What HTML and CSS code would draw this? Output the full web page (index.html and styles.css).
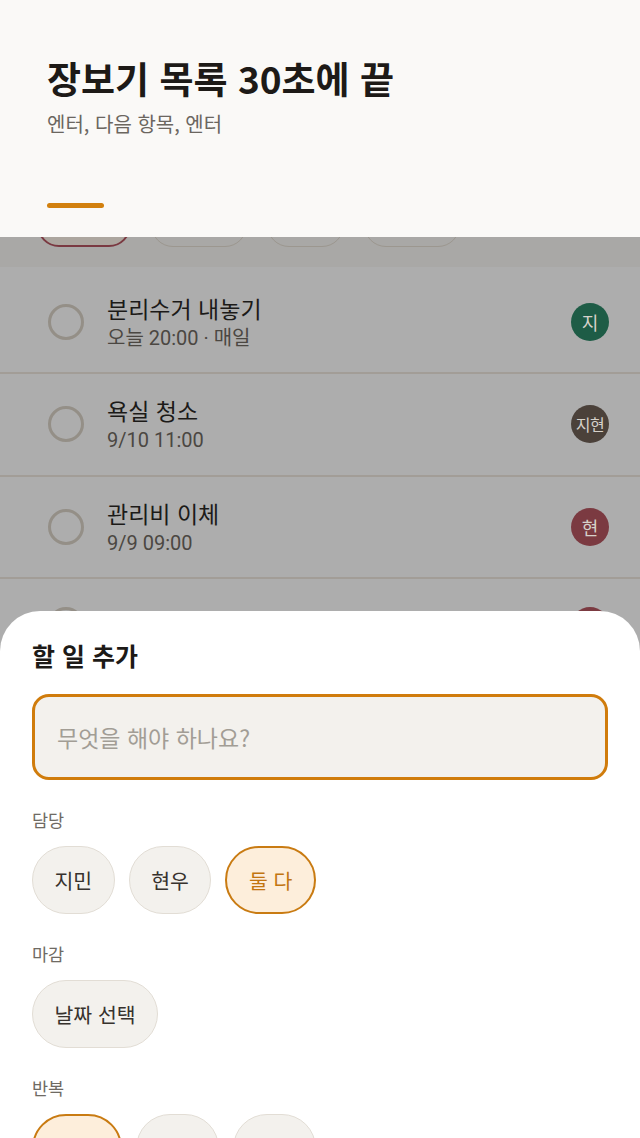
FILE: index.html
```html
<!DOCTYPE html>
<html lang="ko">
<head>
<meta charset="utf-8">
<title>장보기 목록</title>
<link rel="stylesheet" href="styles.css">
</head>
<body>
<div class="screen">
  <header class="top">
    <h1 class="title">장보기 목록 30초에 끝</h1>
    <p class="sub">엔터, 다음 항목, 엔터</p>
    <div class="tab-bar"></div>
  </header>

  <div class="dimmed">
    <div class="filters">
      <span class="fchip fchip-on f1">전체</span>
      <span class="fchip f2">지민</span>
      <span class="fchip f3">현우</span>
      <span class="fchip f4">함께</span>
    </div>
    <ul class="tasks">
      <li class="task">
        <span class="check"></span>
        <div class="task-text">
          <div class="task-title">분리수거 내놓기</div>
          <div class="task-meta">오늘 20:00 · 매일</div>
        </div>
        <span class="avatar av-green">지</span>
      </li>
      <li class="task">
        <span class="check"></span>
        <div class="task-text">
          <div class="task-title">욕실 청소</div>
          <div class="task-meta">9/10 11:00</div>
        </div>
        <span class="avatar av-brown av-small">지현</span>
      </li>
      <li class="task">
        <span class="check"></span>
        <div class="task-text">
          <div class="task-title">관리비 이체</div>
          <div class="task-meta">9/9 09:00</div>
        </div>
        <span class="avatar av-red">현</span>
      </li>
      <li class="task task-peek">
        <span class="check"></span>
        <div class="task-text">
          <div class="task-title">화분 물 주기</div>
        </div>
        <span class="avatar av-red">현</span>
      </li>
    </ul>
  </div>

  <section class="sheet">
    <h2 class="sheet-title">할 일 추가</h2>
    <div class="field"><span class="placeholder">무엇을 해야 하나요?</span></div>

    <div class="label">담당</div>
    <div class="chips">
      <span class="chip">지민</span>
      <span class="chip">현우</span>
      <span class="chip chip-on">둘 다</span>
    </div>

    <div class="label">마감</div>
    <div class="chips">
      <span class="chip">날짜 선택</span>
    </div>

    <div class="label">반복</div>
    <div class="chips">
      <span class="chip chip-on">안 함</span>
      <span class="chip">매일</span>
      <span class="chip">매주</span>
    </div>
  </section>
</div>
</body>
</html>
```

FILE: styles.css
```css
* { box-sizing: border-box; }
html, body {
  margin: 0;
  padding: 0;
  height: 1138px;
  overflow: hidden;
  background: #adadad;
  font-family: "Noto Sans CJK KR", "Noto Sans", sans-serif;
}
.screen {
  position: relative;
  width: 640px;
  height: 1138px;
  overflow: hidden;
}

/* header */
.top {
  position: relative;
  z-index: 2;
  background: #faf9f7;
  height: 237px;
  padding: 55px 47px 0;
}
.title {
  margin: 0;
  font-size: 37px;
  line-height: 46px;
  font-weight: 700;
  color: #1d1a17;
}
.sub {
  margin: 9px 0 0;
  font-size: 20px;
  line-height: 28px;
  color: #6b665f;
}
.tab-bar {
  margin-top: 65px;
  width: 57px;
  height: 5px;
  border-radius: 3px;
  background: #d2800e;
}

/* dimmed content */
.dimmed {
  position: relative;
  z-index: 1;
}
.filters {
  margin-top: -34px;
  padding: 0 0 20px 37px;
  display: flex;
  gap: 20px;
  background: #a9a8a6;
}
.fchip {
  height: 44px;
  border-radius: 22px;
  border: 1.5px solid #9c978f;
  display: inline-flex;
  align-items: center;
  justify-content: center;
  font-size: 17px;
  color: #4a4540;
}
.fchip-on {
  border: 2px solid #7a3941;
  background: #aca69f;
}
.f1 { width: 94px; }
.f2 { width: 96px; }
.f3 { width: 77px; }
.f4 { width: 96px; }

.tasks {
  list-style: none;
  margin: 0;
  padding: 4.5px 0 0;
  background: #adadad;
}
.task {
  height: 102.5px;
  border-bottom: 2px solid #a29d97;
  display: flex;
  align-items: center;
  padding: 0 31px 0 48px;
}
.check {
  width: 36px;
  height: 36px;
  border-radius: 50%;
  border: 3px solid #948f87;
  flex: none;
}
.task-text {
  flex: 1;
  margin-left: 23px;
  font-family: Roboto, "Noto Sans CJK KR", sans-serif;
}
.task-title {
  font-family: "Noto Sans CJK KR", sans-serif;
  font-size: 23px;
  line-height: 30px;
  color: #1c1a18;
}
.task-meta {
  margin-top: 2px;
  font-size: 20px;
  line-height: 26px;
  color: #4b4742;
}
.avatar {
  width: 38px;
  height: 38px;
  border-radius: 50%;
  flex: none;
  display: flex;
  align-items: center;
  justify-content: center;
  font-size: 18px;
  color: #d6d1ca;
}
.av-small { font-size: 16px; letter-spacing: -0.5px; }
.av-green { background: #1e5c46; }
.av-brown { background: #4b413a; }
.av-red { background: #7b3a41; }
.task-peek { align-items: flex-start; padding-top: 28px; }

/* bottom sheet */
.sheet {
  position: absolute;
  z-index: 3;
  left: 0;
  right: 0;
  top: 611px;
  height: 560px;
  background: #ffffff;
  border-radius: 40px 40px 0 0;
  padding: 27px 32px 0;
}
.sheet-title {
  margin: 0;
  font-size: 25px;
  line-height: 34px;
  font-weight: 700;
  color: #1d1a17;
}
.field {
  margin-top: 22px;
  height: 86px;
  border: 3px solid #d07c0c;
  border-radius: 17px;
  background: #f3f1ed;
  display: flex;
  align-items: center;
  padding: 0 22px;
}
.placeholder {
  font-size: 23px;
  color: #a29d95;
}
.label {
  margin-top: 28px;
  font-size: 17.5px;
  line-height: 24px;
  color: #6f6a63;
}
.chips {
  margin-top: 14px;
  display: flex;
  gap: 14px;
}
.chip {
  height: 68px;
  padding: 0 21.5px;
  border: 1.5px solid #e2ddd5;
  border-radius: 34px;
  background: #f3f1ed;
  display: inline-flex;
  align-items: center;
  font-size: 20.5px;
  color: #37322d;
}
.chip-on {
  background: #fdeedb;
  border: 2px solid #c97b12;
  color: #c27510;
}
```
